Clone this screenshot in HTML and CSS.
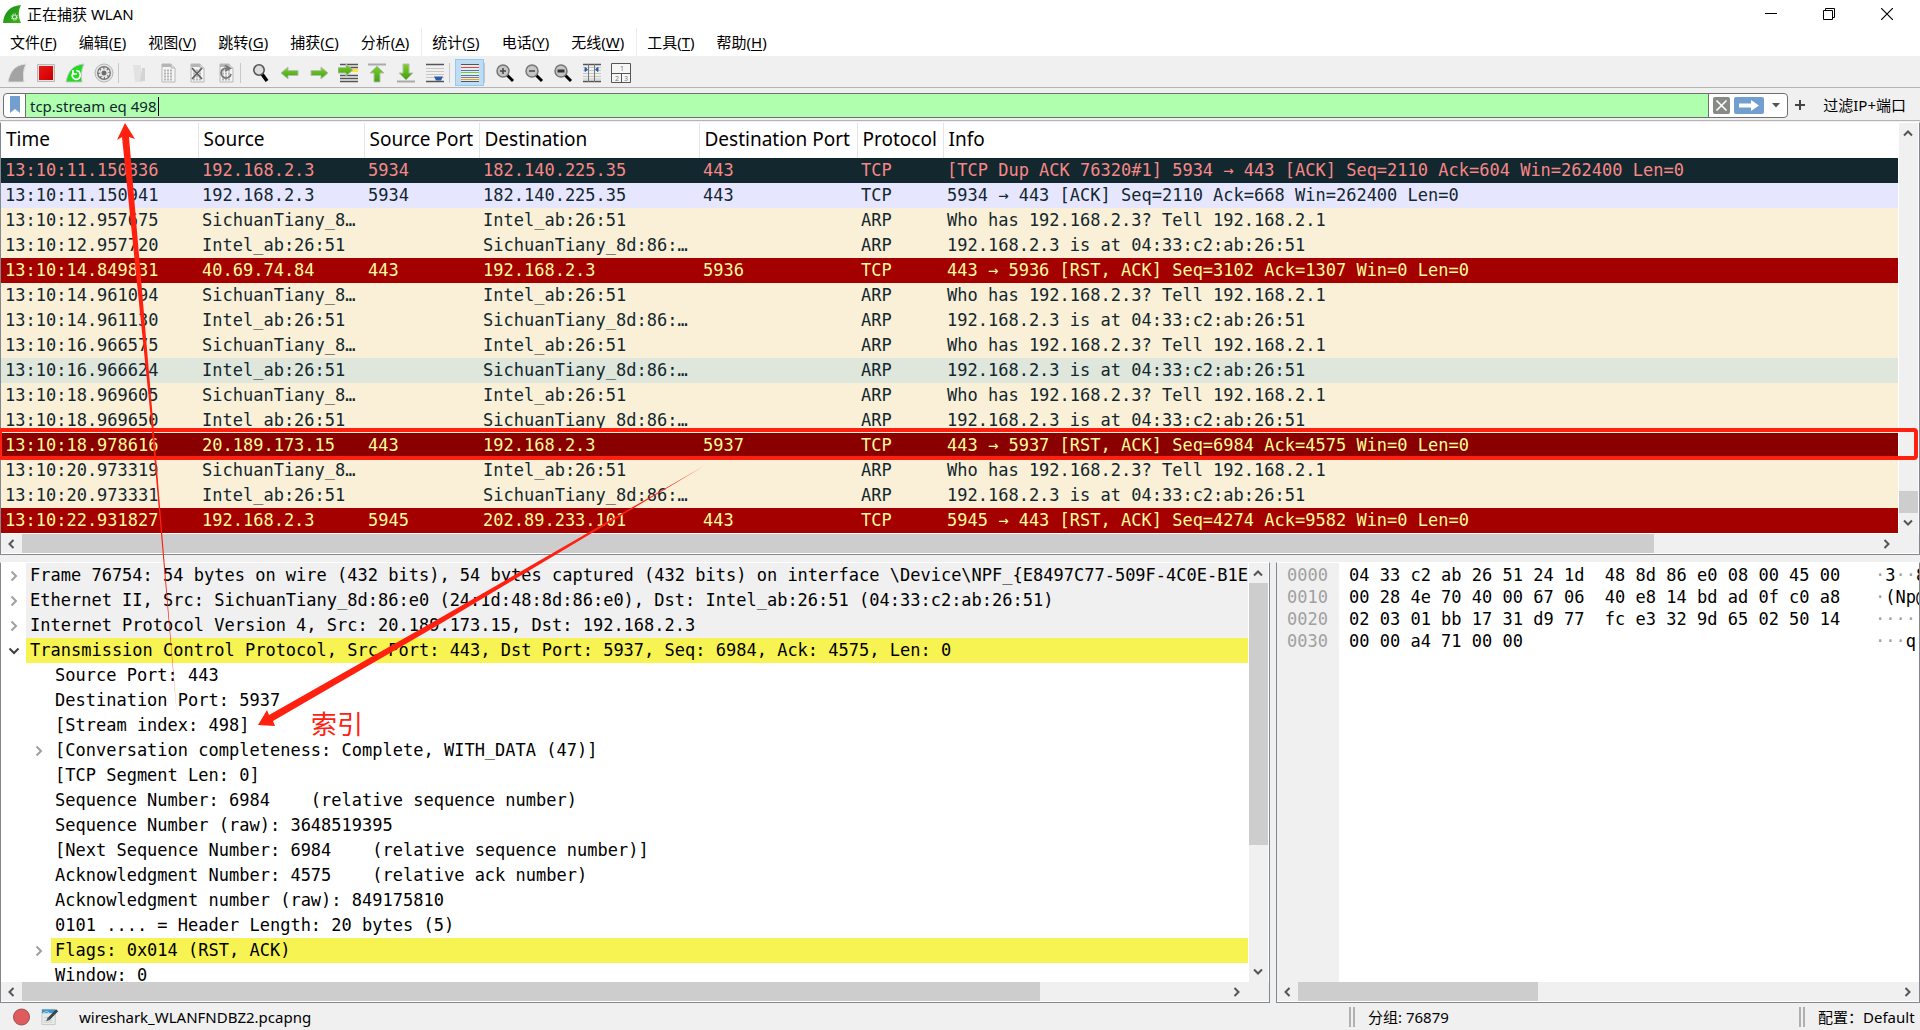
FILE: index.html
```html
<!DOCTYPE html>
<html lang="zh-CN">
<head>
<meta charset="utf-8">
<title>正在捕获 WLAN</title>
<link rel="stylesheet" href="styles.css">
</head>
<body>
<svg class="defs" aria-hidden="true">
  <defs>
    <linearGradient id="fin" x1="0" y1="0" x2="1" y2="1"><stop offset="0" stop-color="#0f8a12"/><stop offset="1" stop-color="#3fb51c"/></linearGradient>
    <linearGradient id="leaf" x1="0" y1="0" x2="0" y2="1"><stop offset="0" stop-color="#7fd02c"/><stop offset="1" stop-color="#3fa010"/></linearGradient>
    <linearGradient id="stop" x1="0" y1="0" x2="1" y2="1"><stop offset="0" stop-color="#f01515"/><stop offset="1" stop-color="#c80000"/></linearGradient>
    <symbol id="up" viewBox="0 0 12 12"><path d="M2 8.500L6 4.500L10 8.500" fill="none" stroke="#555" stroke-width="2"/></symbol>
    <symbol id="down" viewBox="0 0 12 12"><path d="M2 3.500L6 7.500L10 3.500" fill="none" stroke="#555" stroke-width="2"/></symbol>
    <symbol id="left" viewBox="0 0 12 12"><path d="M8.500 2L4.500 6L8.500 10" fill="none" stroke="#555" stroke-width="2"/></symbol>
    <symbol id="right" viewBox="0 0 12 12"><path d="M3.500 2L7.500 6L3.500 10" fill="none" stroke="#555" stroke-width="2"/></symbol>
    <symbol id="closed" viewBox="0 0 12 12"><path d="M3.500 1.500L8 6L3.500 10.500" fill="none" stroke="#a0a0a0" stroke-width="2"/></symbol>
    <symbol id="open" viewBox="0 0 12 12"><path d="M1.500 3.500L6 8L10.500 3.500" fill="none" stroke="#404040" stroke-width="2"/></symbol>
    <symbol id="sheet" viewBox="0 0 20 20"><path d="M4 1H13L17 5V19H4Z" fill="#f4f4f4" stroke="#b8b8b8"/><path d="M4 1H13V4H4Z" fill="#b5b5b5"/><path d="M13 1V5H17" fill="#ddd" stroke="#b8b8b8"/><path d="M6 7.500H15M6 10.500H15M6 13.500H15M6 16.500H15" stroke="#b4b4b4" stroke-width="2" stroke-dasharray="2 1"/></symbol>
    <symbol id="lens" viewBox="0 0 20 20"><path d="M12 12L18 18" stroke="#000" stroke-width="3"/><circle cx="8" cy="8" r="6" fill="#c6c6c6" stroke="#777" stroke-width="1.500"/></symbol>
  </defs>
</svg>
<div class="app">
  <header class="titlebar">
    <svg class="logo" viewBox="0 0 20 20"><path d="M1 19C2 9 7 2 19 1C16 7 16 13 19 19Z" fill="url(#fin)"/><circle cx="12.500" cy="13" r="2" fill="none" stroke="#cfeecb" stroke-width="1.200"/><circle cx="12.500" cy="13" r="3.200" fill="none" stroke="#cfeecb" stroke-dasharray="1.300 1.200"/></svg>
    <h1 class="title">正在捕获 WLAN</h1>
    <div class="winbtns">
      <button aria-label="最小化"><svg viewBox="0 0 12 12"><path d="M0 5.500H12" stroke="#000"/></svg></button>
      <button aria-label="还原"><svg viewBox="0 0 12 12"><path d="M.5 2.500H9.500V11.500H.5ZM2.500 2.500V.5H11.500V9.500H9.500" fill="none" stroke="#000"/></svg></button>
      <button aria-label="关闭"><svg viewBox="0 0 12 12"><path d="M0 0L12 12M12 0L0 12" stroke="#000" stroke-width="1.200"/></svg></button>
    </div>
  </header>
  <nav class="menubar">
    <button>文件(<u>F</u>)</button><button>编辑(<u>E</u>)</button><button>视图(<u>V</u>)</button><button>跳转(<u>G</u>)</button><button>捕获(<u>C</u>)</button><button class="ruled">分析(<u>A</u>)</button><button>统计(<u>S</u>)</button><button>电话(<u>Y</u>)</button><button class="ruled">无线(<u>W</u>)</button><button>工具(<u>T</u>)</button><button>帮助(<u>H</u>)</button>
  </nav>
  <div class="toolbar" role="toolbar">
    <button aria-label="开始捕获"><svg viewBox="0 0 20 20"><path d="M1 19C3 9 7 2 19 1C16 7 16 13 17 19Z" fill="#a3a3a3" stroke="#ddd"/></svg></button>
    <button aria-label="停止捕获"><svg viewBox="0 0 20 20"><path d="M1.500 1.500H18.500V18.500H1.500Z" fill="#e4e4e4" stroke="#b8b8b8"/><path d="M3 3H17V17H3Z" fill="url(#stop)"/></svg></button>
    <button aria-label="重新开始"><svg viewBox="0 0 20 20"><path d="M1 19C3 9 7 2 19 1C16 7 16 13 17 19Z" fill="#1fdc1f" stroke="#c5c5c5"/><path d="M8 10A4 4 0 1 0 15 11M8 7V11H12M11 7.500A4 4 0 0 1 15 11" fill="none" stroke="#fff" stroke-width="1.700"/></svg></button>
    <button aria-label="捕获选项"><svg viewBox="0 0 20 20"><circle cx="10" cy="10" r="9" fill="#e5e5e5" stroke="#b5b5b5"/><circle cx="10" cy="10" r="7" fill="#777"/><circle cx="10" cy="10" r="4.600" fill="none" stroke="#eee" stroke-width="2" stroke-dasharray="2.400 1.200"/><circle cx="10" cy="10" r="3.800" fill="#eee"/><circle cx="10" cy="10" r="2.500" fill="#6d6d6d"/></svg></button>
    <span class="sep"></span>
    <button aria-label="打开"><svg viewBox="0 0 20 20"><path d="M4 2H12V17L14 19H6Z" fill="#e2e2e2"/><path d="M13 5H16V18H11Z" fill="#d4d4d4"/></svg></button>
    <button aria-label="保存"><svg viewBox="0 0 20 20"><use href="#sheet"/></svg></button>
    <button aria-label="关闭文件"><svg viewBox="0 0 20 20"><use href="#sheet"/><path d="M5 5L15 16M15 5L5 16" stroke="#5f5f5f" stroke-width="1.800"/></svg></button>
    <button aria-label="重新加载"><svg viewBox="0 0 20 20"><use href="#sheet"/><path d="M8 5.500A5 5 0 1 0 15 11M8 5.500H13M9 2.500L14 5.500L9 8" fill="none" stroke="#777" stroke-width="1.800"/></svg></button>
    <span class="sep"></span>
    <button aria-label="查找"><svg viewBox="0 0 20 20"><path d="M11 11L16 18" stroke="#000" stroke-width="3.500"/><circle cx="8" cy="7" r="5.200" fill="#ddd" stroke="#555" stroke-width="1.600"/></svg></button>
    <button aria-label="上一分组"><svg viewBox="0 0 20 20"><path d="M1 10L8 4V7.500H18V12.500H8V16Z" fill="url(#leaf)" stroke="#b5bfae"/></svg></button>
    <button aria-label="下一分组"><svg viewBox="0 0 20 20"><path d="M19 10L12 4V7.500H2V12.500H12V16Z" fill="url(#leaf)" stroke="#b5bfae"/></svg></button>
    <button aria-label="转到分组"><svg viewBox="0 0 20 20"><path d="M2 1.500H20M2 12.500H20M2 15.500H20M2 18.500H20M10 4.500H20" stroke="#555" stroke-width="1.400"/><path d="M14 7.500H20" stroke="#ffe32e" stroke-width="3"/><path d="M15 7L8 1V4.500H0V10H8V13Z" fill="url(#leaf)" stroke="#b5bfae"/></svg></button>
    <button aria-label="首个分组"><svg viewBox="0 0 20 20"><path d="M1 1.500H19" stroke="#aaa" stroke-width="2"/><path d="M10 3L17 10H13V19H7V10H3Z" fill="url(#leaf)" stroke="#b5bfae"/></svg></button>
    <button aria-label="最后分组"><svg viewBox="0 0 20 20"><path d="M1 18.500H19" stroke="#aaa" stroke-width="2"/><path d="M10 17L17 10H13V1H7V10H3Z" fill="url(#leaf)" stroke="#b5bfae"/></svg></button>
    <button aria-label="自动滚动"><svg viewBox="0 0 20 20"><path d="M1 1.500H19M1 18.500H19" stroke="#555" stroke-width="1.500"/><path d="M1 5.500H19M1 8.500H19M1 11.500H19M1 14.500H19" stroke="#c8c8c2"/><path d="M9 13.500H18L16 17.500H11Z" fill="#2a5cab"/></svg></button>
    <span class="sep"></span>
    <button class="on" aria-pressed="true" aria-label="着色"><svg viewBox="0 0 20 20"><path d="M1 1H19V19H1Z" fill="#e6ebee"/><path d="M1 1.500H19M1 18.500H19" stroke="#555"/><path d="M1 4.500H19" stroke="#e84040"/><path d="M1 7.500H19" stroke="#4976b5"/><path d="M1 9.500H19" stroke="#70d030"/><path d="M1 12.500H19" stroke="#4976b5"/><path d="M1 14.500H19" stroke="#8e70a8"/><path d="M1 16.500H19" stroke="#d0a91c"/></svg></button>
    <span class="sep"></span>
    <button aria-label="放大"><svg viewBox="0 0 20 20"><use href="#lens"/><path d="M5 8H11M8 5V11" stroke="#444" stroke-width="1.500"/></svg></button>
    <button aria-label="缩小"><svg viewBox="0 0 20 20"><use href="#lens"/><path d="M5 8H11" stroke="#444" stroke-width="1.500"/></svg></button>
    <button aria-label="普通大小"><svg viewBox="0 0 20 20"><use href="#lens"/><path d="M4.500 8H11.500" stroke="#333" stroke-width="3"/></svg></button>
    <button aria-label="调整列宽"><svg viewBox="0 0 20 20"><path d="M1 1.500H19M1 18.500H19" stroke="#555" stroke-width="1.500"/><path d="M1 4.500H19M1 7.500H19M1 10.500H19M1 13.500H19M1 16H19" stroke="#c8c8c2"/><path d="M6.500 1V19M12.500 1V19" stroke="#777"/><path d="M3 4.500L5.500 6.500L3 8.500ZM16 4.500L13.500 6.500L16 8.500Z" fill="#2a5cab" stroke="#2a5cab"/></svg></button>
    <button aria-label="重置布局"><svg viewBox="0 0 20 20"><path d="M.5 .5H19.500V19.500H.5ZM.5 10.500H19.500M10.500 10.500V19.500" fill="#f6f6f6" stroke="#555"/><text x="9" y="8">1</text><text x="4" y="18">2</text><text x="13" y="18">3</text></svg></button>
  </div>
  <form class="filterbar">
    <div class="combo">
      <button type="button" class="mark" aria-label="书签"><svg viewBox="0 0 12 18"><path d="M1 0H11V17L6 13L1 17Z" fill="#729fcf"/></svg></button>
      <div class="field"><input type="text" aria-label="显示过滤器" value="tcp.stream eq 498"><span class="caret"></span></div>
      <div class="acts">
        <button type="button" class="clear" aria-label="清除"><svg viewBox="0 0 17 17"><rect width="17" height="17" rx="2" fill="#888a85"/><path d="M3.500 3.500L13.500 13.500M13.500 3.500L3.500 13.500" stroke="#fff" stroke-width="1.600"/></svg></button>
        <button type="button" class="apply" aria-label="应用"><svg viewBox="0 0 30 17"><rect width="30" height="17" rx="2" fill="#729fcf"/><path d="M5 6.500H17V3L25 8.500L17 14V10.500H5Z" fill="#fff"/></svg></button>
        <button type="button" class="more" aria-label="历史"><svg viewBox="0 0 8 5"><path d="M0 0H8L4 4.500Z" fill="#555"/></svg></button>
      </div>
    </div>
    <button type="button" class="plus" aria-label="添加"><svg viewBox="0 0 10 10"><path d="M5 0V10M0 5H10" stroke="#444" stroke-width="2"/></svg></button>
    <button type="button" class="saved">过滤IP+端口</button>
  </form>
  <main class="panes">
    <section class="packets">
      <div class="view">
        <table>
          <colgroup><col class="c-time"><col class="c-src"><col class="c-sport"><col class="c-dst"><col class="c-dport"><col class="c-proto"><col></colgroup>
          <thead><tr><th>Time</th><th>Source</th><th>Source Port</th><th>Destination</th><th>Destination Port</th><th>Protocol</th><th>Info</th></tr></thead>
          <tbody>
            <tr class="dup"><td>13:10:11.150836</td><td>192.168.2.3</td><td>5934</td><td>182.140.225.35</td><td>443</td><td>TCP</td><td>[TCP Dup ACK 76320#1] 5934 → 443 [ACK] Seq=2110 Ack=604 Win=262400 Len=0</td></tr>
            <tr class="tcp"><td>13:10:11.150941</td><td>192.168.2.3</td><td>5934</td><td>182.140.225.35</td><td>443</td><td>TCP</td><td>5934 → 443 [ACK] Seq=2110 Ack=668 Win=262400 Len=0</td></tr>
            <tr><td>13:10:12.957675</td><td>SichuanTiany_8…</td><td></td><td>Intel_ab:26:51</td><td></td><td>ARP</td><td>Who has 192.168.2.3? Tell 192.168.2.1</td></tr>
            <tr><td>13:10:12.957720</td><td>Intel_ab:26:51</td><td></td><td>SichuanTiany_8d:86:…</td><td></td><td>ARP</td><td>192.168.2.3 is at 04:33:c2:ab:26:51</td></tr>
            <tr class="rst"><td>13:10:14.849831</td><td>40.69.74.84</td><td>443</td><td>192.168.2.3</td><td>5936</td><td>TCP</td><td>443 → 5936 [RST, ACK] Seq=3102 Ack=1307 Win=0 Len=0</td></tr>
            <tr><td>13:10:14.961094</td><td>SichuanTiany_8…</td><td></td><td>Intel_ab:26:51</td><td></td><td>ARP</td><td>Who has 192.168.2.3? Tell 192.168.2.1</td></tr>
            <tr><td>13:10:14.961130</td><td>Intel_ab:26:51</td><td></td><td>SichuanTiany_8d:86:…</td><td></td><td>ARP</td><td>192.168.2.3 is at 04:33:c2:ab:26:51</td></tr>
            <tr><td>13:10:16.966575</td><td>SichuanTiany_8…</td><td></td><td>Intel_ab:26:51</td><td></td><td>ARP</td><td>Who has 192.168.2.3? Tell 192.168.2.1</td></tr>
            <tr class="hover"><td>13:10:16.966624</td><td>Intel_ab:26:51</td><td></td><td>SichuanTiany_8d:86:…</td><td></td><td>ARP</td><td>192.168.2.3 is at 04:33:c2:ab:26:51</td></tr>
            <tr><td>13:10:18.969605</td><td>SichuanTiany_8…</td><td></td><td>Intel_ab:26:51</td><td></td><td>ARP</td><td>Who has 192.168.2.3? Tell 192.168.2.1</td></tr>
            <tr><td>13:10:18.969650</td><td>Intel_ab:26:51</td><td></td><td>SichuanTiany_8d:86:…</td><td></td><td>ARP</td><td>192.168.2.3 is at 04:33:c2:ab:26:51</td></tr>
            <tr class="rst selected"><td>13:10:18.978616</td><td>20.189.173.15</td><td>443</td><td>192.168.2.3</td><td>5937</td><td>TCP</td><td>443 → 5937 [RST, ACK] Seq=6984 Ack=4575 Win=0 Len=0</td></tr>
            <tr><td>13:10:20.973319</td><td>SichuanTiany_8…</td><td></td><td>Intel_ab:26:51</td><td></td><td>ARP</td><td>Who has 192.168.2.3? Tell 192.168.2.1</td></tr>
            <tr><td>13:10:20.973331</td><td>Intel_ab:26:51</td><td></td><td>SichuanTiany_8d:86:…</td><td></td><td>ARP</td><td>192.168.2.3 is at 04:33:c2:ab:26:51</td></tr>
            <tr class="rst"><td>13:10:22.931827</td><td>192.168.2.3</td><td>5945</td><td>202.89.233.101</td><td>443</td><td>TCP</td><td>5945 → 443 [RST, ACK] Seq=4274 Ack=9582 Win=0 Len=0</td></tr>
          </tbody>
        </table>
      </div>
      <div class="vbar"><svg><use href="#up"/></svg><div class="track"><span class="gap" style="flex-grow:94"></span><span class="thumb" style="flex-grow:6"></span></div><svg><use href="#down"/></svg></div>
      <div class="hbar"><svg><use href="#left"/></svg><div class="track"><span class="thumb" style="flex-grow:88"></span><span class="gap" style="flex-grow:12"></span></div><svg><use href="#right"/></svg></div>
    </section>
    <div class="lower">
      <section class="details">
        <div class="view">
          <ul class="tree">
            <li><svg><use href="#closed"/></svg><span class="line layer">Frame 76754: 54 bytes on wire (432 bits), 54 bytes captured (432 bits) on interface \Device\NPF_{E8497C77-509F-4C0E-B1E</span></li>
            <li><svg><use href="#closed"/></svg><span class="line layer">Ethernet II, Src: SichuanTiany_8d:86:e0 (24:1d:48:8d:86:e0), Dst: Intel_ab:26:51 (04:33:c2:ab:26:51)</span></li>
            <li><svg><use href="#closed"/></svg><span class="line layer">Internet Protocol Version 4, Src: 20.189.173.15, Dst: 192.168.2.3</span></li>
            <li><svg><use href="#open"/></svg><span class="line warn">Transmission Control Protocol, Src Port: 443, Dst Port: 5937, Seq: 6984, Ack: 4575, Len: 0</span></li>
            <li class="sub"><span class="line">Source Port: 443</span></li>
            <li class="sub"><span class="line">Destination Port: 5937</span></li>
            <li class="sub"><span class="line">[Stream index: 498]</span></li>
            <li class="sub"><svg><use href="#closed"/></svg><span class="line">[Conversation completeness: Complete, WITH_DATA (47)]</span></li>
            <li class="sub"><span class="line">[TCP Segment Len: 0]</span></li>
            <li class="sub"><span class="line">Sequence Number: 6984    (relative sequence number)</span></li>
            <li class="sub"><span class="line">Sequence Number (raw): 3648519395</span></li>
            <li class="sub"><span class="line">[Next Sequence Number: 6984    (relative sequence number)]</span></li>
            <li class="sub"><span class="line">Acknowledgment Number: 4575    (relative ack number)</span></li>
            <li class="sub"><span class="line">Acknowledgment number (raw): 849175810</span></li>
            <li class="sub"><span class="line">0101 .... = Header Length: 20 bytes (5)</span></li>
            <li class="sub"><svg><use href="#closed"/></svg><span class="line warn">Flags: 0x014 (RST, ACK)</span></li>
            <li class="sub"><span class="line">Window: 0</span></li>
          </ul>
        </div>
        <div class="vbar"><svg><use href="#up"/></svg><div class="track"><span class="thumb" style="flex-grow:69"></span><span class="gap" style="flex-grow:31"></span></div><svg><use href="#down"/></svg></div>
        <div class="hbar"><svg><use href="#left"/></svg><div class="track"><span class="thumb" style="flex-grow:845"></span><span class="gap" style="flex-grow:155"></span></div><svg><use href="#right"/></svg></div>
      </section>
      <section class="bytes">
        <div class="view">
<pre class="offsets">0000
0010
0020
0030</pre>
<pre class="hex">04 33 c2 ab 26 51 24 1d  48 8d 86 e0 08 00 45 00
00 28 4e 70 40 00 67 06  40 e8 14 bd ad 0f c0 a8
02 03 01 bb 17 31 d9 77  fc e3 32 9d 65 02 50 14
00 00 a4 71 00 00</pre>
<pre class="ascii"><i>·</i>3<i>··</i>8
<i>·</i>(Np@
<i>····</i>
<i>···</i>q</pre>
        </div>
        <div class="hbar"><svg><use href="#left"/></svg><div class="track"><span class="thumb" style="flex-grow:40"></span><span class="gap" style="flex-grow:60"></span></div><svg><use href="#right"/></svg></div>
      </section>
    </div>
  </main>
  <footer class="status">
    <div class="file">
      <button aria-label="专家信息"><svg viewBox="0 0 18 18"><circle cx="9" cy="9" r="8" fill="#e05c5c" stroke="#9c5050"/></svg></button>
      <button aria-label="捕获文件注释"><svg viewBox="0 0 20 18"><path d="M1 1H15V17H1Z" fill="#e6ece8" stroke="#c5c8c5"/><path d="M1 1H15V5H1Z" fill="#3d95cf"/><path d="M2 5L6 3L9 5M3 9.500H8M3 12.500H12M3 14.500H12" stroke="#c9d2d2" fill="none"/><path d="M8 11L17 2" fill="none" stroke="#3b4348" stroke-width="3"/><path d="M5.500 13.500L7 9.500L9.500 12Z" fill="#555"/></svg></button>
      <span>wireshark_WLANFNDBZ2.pcapng</span>
    </div>
    <div class="count">分组: 76879</div>
    <div class="profile">配置：Default</div>
  </footer>
  <div class="callout"></div>
  <svg class="arrows" width="720" height="740" aria-hidden="true"><path d="M125 123L135 139L129 137L153 420L177 716L151 420L122 137L117 140Z"/><path d="M258 725L267 710L269 715L440 618L704 466L440 624L273 721L275 726Z"/></svg>
  <span class="note">索引</span>
</div>
</body>
</html>
```
FILE: styles.css
```css
* { box-sizing: border-box; }
body {
  margin: 0;
  background: #f0f0f0;
  color: #000;
  font-family: "Noto Sans", "Noto Sans CJK SC", sans-serif;
  font-size: 15px;
  line-height: 20px;
}
button {
  display: flex;
  align-items: center;
  justify-content: center;
  padding: 0;
  border: 0;
  background: none;
  color: inherit;
  font: inherit;
  white-space: nowrap;
}
svg { display: block; flex: none; }
.defs { position: absolute; width: 0; height: 0; }
.app {
  position: relative;
  display: flex;
  flex-direction: column;
  height: 100vh;
  overflow: hidden;
}

/* Window chrome */
.titlebar {
  display: flex;
  align-items: center;
  height: 28px;
  padding-left: 2px;
  gap: 5px;
  background: #fff;
}
.logo { width: 20px; height: 20px; }
.title { flex: 1; margin: 0; font-size: 15px; font-weight: 400; }
.winbtns { display: flex; padding-right: 4px; }
.winbtns button { width: 58px; height: 28px; }
.winbtns svg { width: 12px; height: 12px; }
.menubar { display: flex; height: 28px; background: #fff; }
.menubar button { padding: 0 12px 0 10px; }
.menubar .ruled { border-right: 1px solid #ececec; }
.menubar u { text-underline-offset: 2px; }

/* Toolbars */
.toolbar {
  display: flex;
  align-items: center;
  height: 32px;
  padding: 2px 2px 0;
  border-bottom: 1px solid #b4b4b4;
}
.toolbar button { width: 29px; height: 27px; }
.toolbar button svg { width: 20px; height: 20px; }
.toolbar .on { border: 1px solid #90c8f6; background: #c0dcf3; }
.toolbar text { font-size: 7px; fill: #777; }
.sep { width: 6px; height: 20px; border-left: 1px solid #c8c8c8; }
.filterbar {
  display: flex;
  align-items: center;
  height: 33px;
  padding: 5px 14px 3px 3px;
  margin: 0;
  border-bottom: 1px solid #b4b4b4;
}
.combo {
  display: flex;
  flex: 1;
  height: 25px;
  overflow: hidden;
  border: 1px solid #707070;
  border-radius: 4px;
  background: #fff;
}
.mark { width: 21px; }
.mark svg { width: 12px; height: 18px; }
.field {
  position: relative;
  display: flex;
  flex: 1;
  border: solid #707070;
  border-width: 0 1px;
}
.field input {
  flex: 1;
  min-width: 0;
  padding: 2px 4px 0;
  border: 0;
  outline: 0;
  background: #afffaf;
  color: #12272e;
  font: inherit;
}
.caret { position: absolute; left: 132px; top: 3px; width: 1px; height: 19px; background: #000; }
.acts { display: flex; align-items: center; padding: 0 3px 0 4px; gap: 4px; }
.clear svg { width: 17px; height: 17px; }
.apply svg { width: 30px; height: 17px; }
.more { width: 16px; }
.more svg { width: 8px; height: 5px; }
.plus { width: 24px; }
.plus svg { width: 10px; height: 10px; }
.saved { margin-left: 11px; }

/* Panes */
.panes { display: flex; flex: 1; min-height: 0; flex-direction: column; gap: 7px; padding-top: 1px; }
.packets, .details, .bytes {
  display: grid;
  min-width: 0;
  min-height: 0;
  overflow: hidden;
  border: 1px solid #828790;
  border-top-color: #fff;
  background: #fff;
}
.packets, .details { grid-template: minmax(0, 1fr) 20px / minmax(0, 1fr) 21px; }
.bytes { grid-template: minmax(0, 1fr) 20px / minmax(0, 1fr); }
.view { min-width: 0; min-height: 0; overflow: hidden; font-family: "DejaVu Sans Mono", "Noto Sans CJK SC", monospace; font-size: 17px; }
.packets .view { padding-bottom: 1px; }
table { width: 100%; border-collapse: collapse; table-layout: fixed; }
.c-time { width: 197px; }
.c-src { width: 166px; }
.c-sport { width: 115px; }
.c-dst { width: 220px; }
.c-dport { width: 158px; }
.c-proto { width: 86px; }
th {
  height: 35px;
  padding: 0 0 4px 5px;
  border-right: 1px solid #e5e5e5;
  font: 400 19px/24px "Noto Sans", sans-serif;
  text-align: left;
  white-space: nowrap;
}
th:last-child { border-right: 0; }
td { height: 25px; padding: 0 0 0 4px; line-height: 25px; white-space: pre; overflow: hidden; }
tbody tr { background: #faf0d7; color: #12272e; }
tbody .dup { background: #12272e; color: #f78787; }
tbody .tcp { background: #e7e6ff; }
tbody .hover { background: #dfe6db; }
tbody .rst { background: #a40000; color: #fffc9c; }
tbody .selected { background: #8a0000; }

/* Scroll bars */
.vbar, .hbar { display: flex; background: #f0f0f0; }
.vbar { flex-direction: column; margin: 0 1px; }
.hbar { grid-column: 1; margin: 0 0 1px; }
.packets .hbar, .details .hbar { grid-column: 1 / 3; padding-right: 21px; }
.vbar svg { width: 12px; height: 20px; margin: 0 3px; }
.packets .vbar { padding-bottom: 1px; }
.hbar svg { width: 12px; height: 12px; margin: 4px 5px 3px 4px; }
.track { display: flex; flex: 1; min-height: 0; }
.vbar .track { flex-direction: column; }
.thumb, .gap { flex-basis: 0; }
.thumb { background: #cdcdcd; }

/* Details tree and bytes */
.lower { display: grid; flex: 1; min-height: 0; grid-template-columns: minmax(0, 1270fr) minmax(0, 644fr); gap: 6px; }
.tree { margin: 0; padding: 0; list-style: none; }
.tree li { display: flex; align-items: center; justify-content: flex-end; height: 25px; }
.tree svg { width: 12px; height: 12px; margin-right: 6px; }
.line { flex: none; width: calc(100% - 25px); padding-left: 4px; line-height: 25px; white-space: pre; overflow: hidden; }
.sub .line { width: calc(100% - 50px); }
.layer { background: #f0f0f0; }
.warn { background: #f7f352; }
.bytes .view { display: flex; }
pre { flex: none; margin: 0; padding-top: 1px; font: inherit; line-height: 22px; }
.offsets { width: 62px; padding-left: 10px; background: #f0f0f0; color: #a0a0a0; }
.hex { width: 536px; padding-left: 10px; }
.ascii i { color: #a0a0a0; font-style: normal; }

/* Status bar */
.status { display: grid; grid-template-columns: minmax(0, 1349fr) minmax(0, 450fr) minmax(0, 121fr); height: 27px; align-items: center; }
.file { display: flex; align-items: center; padding-left: 12px; gap: 10px; }
.file button svg { width: 19px; height: 18px; }
.file span { padding-left: 9px; }
.count, .profile { border-left: 6px double #b0b0b0; padding-left: 13px; white-space: nowrap; }

/* Red mark-up over the window */
.callout {
  position: absolute;
  top: 428px;
  left: -2px;
  right: 2px;
  height: 32px;
  border: 4px solid #ff2010;
  border-radius: 4px;
}
.arrows { position: absolute; top: 0; left: 0; fill: #ff2010; }
.note { position: absolute; top: 708px; left: 311px; color: #ff2010; font-size: 26px; line-height: 32px; }
```
